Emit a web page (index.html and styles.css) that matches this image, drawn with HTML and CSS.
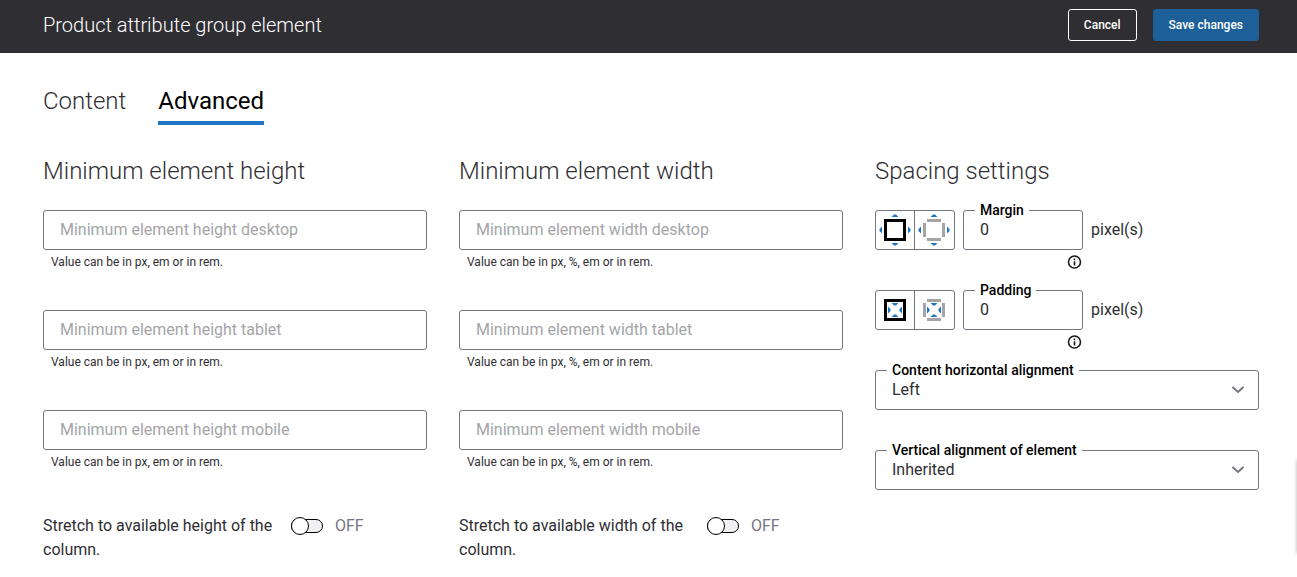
FILE: index.html
```
<!DOCTYPE html>
<html lang="en">
<head>
    <meta charset="UTF-8">
    <meta name="viewport" content="width=device-width, initial-scale=1.0">
    <title>Product attribute group element</title>
    <link rel="stylesheet" href="styles.css">
</head>
<body>

    <!-- Header -->
    <header class="top-bar">
        <h1>Product attribute group element</h1>
        <div class="actions">
            <button type="button" class="btn btn-outline">Cancel</button>
            <button type="submit" form="settings" class="btn btn-primary">Save changes</button>
        </div>
    </header>

    <main>
        <nav class="tabs">
            <a href="#content">Content</a>
            <a href="#advanced" class="active">Advanced</a>
        </nav>

        <form id="settings" class="columns">
            <!-- Height -->
            <section>
                <h2>Minimum element height</h2>
                <div class="field">
                    <input type="text" placeholder="Minimum element height desktop" aria-label="Minimum element height desktop">
                    <p class="hint">Value can be in px, em or in rem.</p>
                </div>
                <div class="field">
                    <input type="text" placeholder="Minimum element height tablet" aria-label="Minimum element height tablet">
                    <p class="hint">Value can be in px, em or in rem.</p>
                </div>
                <div class="field">
                    <input type="text" placeholder="Minimum element height mobile" aria-label="Minimum element height mobile">
                    <p class="hint">Value can be in px, em or in rem.</p>
                </div>
                <div class="toggle-row">
                    <label for="stretch-height">Stretch to available height of the column.</label>
                    <input type="checkbox" id="stretch-height" class="switch" role="switch">
                    <span class="state">OFF</span>
                </div>
            </section>

            <!-- Width -->
            <section>
                <h2>Minimum element width</h2>
                <div class="field">
                    <input type="text" placeholder="Minimum element width desktop" aria-label="Minimum element width desktop">
                    <p class="hint">Value can be in px, %, em or in rem.</p>
                </div>
                <div class="field">
                    <input type="text" placeholder="Minimum element width tablet" aria-label="Minimum element width tablet">
                    <p class="hint">Value can be in px, %, em or in rem.</p>
                </div>
                <div class="field">
                    <input type="text" placeholder="Minimum element width mobile" aria-label="Minimum element width mobile">
                    <p class="hint">Value can be in px, %, em or in rem.</p>
                </div>
                <div class="toggle-row">
                    <label for="stretch-width">Stretch to available width of the column.</label>
                    <input type="checkbox" id="stretch-width" class="switch" role="switch">
                    <span class="state">OFF</span>
                </div>
            </section>

            <!-- Spacing -->
            <section>
                <h2>Spacing settings</h2>
                <div class="spacing">
                    <div class="side-picker">
                        <button type="button" aria-label="Same margin on all sides">
                            <svg width="32" height="32" viewBox="0 0 32 32">
                                <rect x="6.5" y="6.5" width="19" height="19" fill="none" stroke="#000" stroke-width="3"/>
                                <path fill="#1f76c2" d="M15 0.5h2l2.5 2.5h-7zM15 31.5h2l2.5-2.5h-7zM0.5 15v2l2.5 2.5v-7zM31.5 15v2l-2.5 2.5v-7z"/>
                            </svg>
                        </button>
                        <button type="button" aria-label="Margin for each side">
                            <svg width="32" height="32" viewBox="0 0 32 32">
                                <path fill="#a5a5a9" d="M9 5h14v3H9zM9 24h14v3H9zM5 9h3v14H5zM24 9h3v14h-3z"/>
                                <path fill="#1f76c2" d="M15 0.5h2l2.5 2.5h-7zM15 31.5h2l2.5-2.5h-7zM0.5 15v2l2.5 2.5v-7zM31.5 15v2l-2.5 2.5v-7z"/>
                            </svg>
                        </button>
                    </div>
                    <div class="amount">
                        <div class="outlined">
                            <label for="margin">Margin</label>
                            <input type="text" id="margin" value="0">
                        </div>
                        <button type="button" class="info" aria-label="About margin">
                            <svg width="16" height="16" viewBox="0 0 16 16">
                                <circle cx="7.5" cy="8" r="6" fill="none" stroke="#1b1b1d" stroke-width="1.6"/>
                                <path fill="#1b1b1d" d="M6.7 4.6h1.6v1.6H6.7zM6.7 7.2h1.6v4.2H6.7z"/>
                            </svg>
                        </button>
                    </div>
                    <span class="unit">pixel(s)</span>
                </div>
                <div class="spacing">
                    <div class="side-picker">
                        <button type="button" aria-label="Same padding on all sides">
                            <svg width="32" height="32" viewBox="0 0 32 32">
                                <rect x="6.5" y="6.5" width="19" height="19" fill="none" stroke="#000" stroke-width="3"/>
                                <path fill="#1f76c2" d="M12.5 9h7L17 11.5h-2zM12.5 23h7L17 20.5h-2zM9 12.5v7l2.5-2.5v-2zM23 12.5v7L20.5 17v-2z"/>
                            </svg>
                        </button>
                        <button type="button" aria-label="Padding for each side">
                            <svg width="32" height="32" viewBox="0 0 32 32">
                                <path fill="#a5a5a9" d="M9 5h14v3H9zM9 24h14v3H9zM5 9h3v14H5zM24 9h3v14h-3z"/>
                                <path fill="#1f76c2" d="M12.5 9h7L17 11.5h-2zM12.5 23h7L17 20.5h-2zM9 12.5v7l2.5-2.5v-2zM23 12.5v7L20.5 17v-2z"/>
                            </svg>
                        </button>
                    </div>
                    <div class="amount">
                        <div class="outlined">
                            <label for="padding">Padding</label>
                            <input type="text" id="padding" value="0">
                        </div>
                        <button type="button" class="info" aria-label="About padding">
                            <svg width="16" height="16" viewBox="0 0 16 16">
                                <circle cx="7.5" cy="8" r="6" fill="none" stroke="#1b1b1d" stroke-width="1.6"/>
                                <path fill="#1b1b1d" d="M6.7 4.6h1.6v1.6H6.7zM6.7 7.2h1.6v4.2H6.7z"/>
                            </svg>
                        </button>
                    </div>
                    <span class="unit">pixel(s)</span>
                </div>
                <div class="outlined select-field">
                    <label for="h-align">Content horizontal alignment</label>
                    <select id="h-align">
                        <option>Left</option>
                        <option>Center</option>
                        <option>Right</option>
                    </select>
                    <svg class="chevron" width="14" height="8" viewBox="0 0 14 8"><path d="M1.5 1L7 6l5.5-5" fill="none" stroke="#75757f" stroke-width="2"/></svg>
                </div>
                <div class="outlined select-field">
                    <label for="v-align">Vertical alignment of element</label>
                    <select id="v-align">
                        <option>Inherited</option>
                        <option>Top</option>
                        <option>Middle</option>
                        <option>Bottom</option>
                    </select>
                    <svg class="chevron" width="14" height="8" viewBox="0 0 14 8"><path d="M1.5 1L7 6l5.5-5" fill="none" stroke="#75757f" stroke-width="2"/></svg>
                </div>
            </section>
        </form>
    </main>

    <!-- Closed side panel, only its shadow shows -->
    <aside class="side-panel"></aside>

</body>
</html>
```

FILE: styles.css
```
/* General Styles */
* { margin: 0; padding: 0; box-sizing: border-box; }
body { font-family: Roboto, sans-serif; font-size: 16px; line-height: 24px; color: #2f2e33; background: #fff; }
input, select, button { font: inherit; color: inherit; }

/* Header */
.top-bar { display: flex; align-items: center; justify-content: space-between;
    padding: 9px 38px 12px 43px; background: #2f2e33; color: #fff; }
.top-bar h1 { font-size: 20px; font-weight: 300; }
.actions { display: flex; gap: 16px; }
.btn { height: 32px; padding: 0 15px; border: 1px solid #fff; border-radius: 3px;
    background: transparent; color: #fff; font-size: 12px; font-weight: 500; cursor: pointer; }
.btn-primary { background: #1c5f99; border-color: #1c5f99; }

/* Tabs */
main { padding: 32px 38px 0 43px; }
.tabs { display: flex; gap: 32px; }
.tabs a { padding-bottom: 4px; border-bottom: 4px solid transparent; font-size: 24px; line-height: 32px;
    font-weight: 300; color: #2f2e33; text-decoration: none; }
.tabs .active { border-color: #1f76c2; font-weight: 400; color: #000; }

/* Columns */
.columns { display: grid; grid-template-columns: repeat(3, 1fr); gap: 32px; margin-top: 30px; }
.columns h2 { margin-bottom: 23px; font-size: 24px; line-height: 32px; font-weight: 300; }

/* Text fields */
.field { height: 100px; }
.field input, .outlined input, .outlined select { display: block; width: 100%; height: 40px; padding: 0 16px;
    border: 1px solid #75757f; border-radius: 3px; background: #fff; outline: none; }
.field input, .outlined input { padding-bottom: 2px; }
.field input::placeholder { color: #a5a5a9; opacity: 1; }
.hint { padding: 4px 8px; font-size: 12px; line-height: 16px; }

/* Toggle */
.toggle-row { display: flex; align-items: flex-start; gap: 12px; padding-top: 4px; }
.toggle-row label { width: 236px; }
.switch { appearance: none; display: flex; align-items: center; width: 32px; height: 14px; margin-top: 5px;
    border: 1px solid #000; border-radius: 7px; background: #f1f1f3; cursor: pointer; }
.switch::before { content: ""; flex: none; width: 16px; height: 16px; margin-left: -1px;
    border: 1px solid #000; border-radius: 50%; background: #fff; }
.switch:checked { justify-content: flex-end; }
.state { color: #75757f; }

/* Outlined fields, label sits over the border */
.outlined { position: relative; }
.outlined label { position: absolute; top: -8px; left: 12px; padding: 0 5px; background: #fff;
    font-size: 14px; line-height: 16px; font-weight: 500; color: #000; }
.select-field { margin-bottom: 40px; }
.select-field select { appearance: none; }
.chevron { position: absolute; top: 16px; right: 14px; pointer-events: none; }

/* Spacing */
.spacing { display: flex; gap: 8px; height: 80px; }
.side-picker { display: flex; width: 80px; height: 40px; border: 1px solid #75757f; border-radius: 3px; }
.side-picker button { display: flex; width: 39px; align-items: center; padding: 0 3px;
    border: none; background: transparent; cursor: pointer; }
.side-picker button:first-child { border-right: 1px solid #75757f; }
.side-picker svg { flex: none; }
.amount { width: 120px; }
.info { display: block; margin: 4px 0 0 auto; border: none; background: transparent; cursor: pointer; }
.info svg { display: block; }
.unit { line-height: 40px; }

/* Side panel */
.side-panel { position: fixed; left: 100%; bottom: 24px; width: 40px; height: 93px;
    box-shadow: 0 0 4px rgba(0, 0, 0, 0.3); }
```
